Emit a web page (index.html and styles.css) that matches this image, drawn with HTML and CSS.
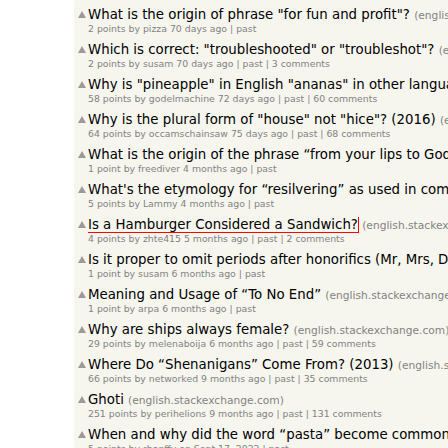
FILE: index.html
```html
<!DOCTYPE html>
<html>
<head>
<meta charset="utf-8">
<link rel="stylesheet" href="styles.css">
</head>
<body>
<main class="page">
  <ul class="list">
    <li class="item"><span class="vote"></span><div class="body"><div class="title"><a class="link">What is the origin of phrase "for fun and profit"?</a> <span class="site">(english.stackexchange.com)</span></div><div class="meta">2 points by pizza 70 days ago | past</div></div></li>
    <li class="item"><span class="vote"></span><div class="body"><div class="title"><a class="link">Which is correct: "troubleshooted" or "troubleshot"?</a> <span class="site">(english.stackexchange.com)</span></div><div class="meta">2 points by susam 70 days ago | past | 3 comments</div></div></li>
    <li class="item"><span class="vote"></span><div class="body"><div class="title"><a class="link">Why is "pineapple" in English "ananas" in other languages?</a> <span class="site">(english.stackexchange.com)</span></div><div class="meta">58 points by godelmachine 72 days ago | past | 60 comments</div></div></li>
    <li class="item"><span class="vote"></span><div class="body"><div class="title"><a class="link">Why is the plural form of "house" not "hice"? (2016)</a> <span class="site">(english.stackexchange.com)</span></div><div class="meta">64 points by occamschainsaw 75 days ago | past | 68 comments</div></div></li>
    <li class="item"><span class="vote"></span><div class="body"><div class="title"><a class="link">What is the origin of the phrase “from your lips to God's ears”?</a> <span class="site">(english.stackexchange.com)</span></div><div class="meta">1 point by freediver 4 months ago | past</div></div></li>
    <li class="item"><span class="vote"></span><div class="body"><div class="title"><a class="link">What's the etymology for “resilvering” as used in computing?</a> <span class="site">(english.stackexchange.com)</span></div><div class="meta">5 points by Lammy 4 months ago | past</div></div></li>
    <li class="item"><span class="vote"></span><div class="body"><div class="title"><a class="link focused">Is a Hamburger Considered a Sandwich?</a> <span class="site">(english.stackexchange.com)</span></div><div class="meta">4 points by zhte415 5 months ago | past | 2 comments</div></div></li>
    <li class="item"><span class="vote"></span><div class="body"><div class="title"><a class="link">Is it proper to omit periods after honorifics (Mr, Mrs, Dr)?</a> <span class="site">(english.stackexchange.com)</span></div><div class="meta">1 point by susam 6 months ago | past</div></div></li>
    <li class="item"><span class="vote"></span><div class="body"><div class="title"><a class="link">Meaning and Usage of “To No End”</a> <span class="site">(english.stackexchange.com)</span></div><div class="meta">1 point by arpa 6 months ago | past</div></div></li>
    <li class="item"><span class="vote"></span><div class="body"><div class="title"><a class="link">Why are ships always female?</a> <span class="site">(english.stackexchange.com)</span></div><div class="meta">29 points by melenaboija 6 months ago | past | 59 comments</div></div></li>
    <li class="item"><span class="vote"></span><div class="body"><div class="title"><a class="link">Where Do “Shenanigans” Come From? (2013)</a> <span class="site">(english.stackexchange.com)</span></div><div class="meta">66 points by networked 9 months ago | past | 35 comments</div></div></li>
    <li class="item"><span class="vote"></span><div class="body"><div class="title"><a class="link">Ghoti</a> <span class="site">(english.stackexchange.com)</span></div><div class="meta">251 points by perihelions 9 months ago | past | 131 comments</div></div></li>
    <li class="item"><span class="vote"></span><div class="body"><div class="title"><a class="link">When and why did the word “pasta” become common in English?</a> <span class="site">(english.stackexchange.com)</span></div><div class="meta">5 points by rbanffy on Sept 17, 2022 | past</div></div></li>
  </ul>
</main>
</body>
</html>
```

FILE: styles.css
```css
html, body {
  margin: 0;
  padding: 0;
  background: #ffffff;
  height: 100%;
  overflow: hidden;
}

.page {
  margin-left: 74px;
  height: 100%;
  background: #f6f6ef;
  font-family: "DejaVu Sans", Verdana, sans-serif;
}

.list {
  list-style: none;
  margin: 0;
  padding: 7px 0 0 3px;
}

.item {
  display: grid;
  grid-template-columns: 11px 1fr;
  margin-bottom: 7px;
  white-space: nowrap;
}

.vote {
  width: 0;
  height: 0;
  margin-top: 4px;
  margin-left: 1px;
  border-left: 4px solid transparent;
  border-right: 4px solid transparent;
  border-bottom: 7px solid #9a9a9a;
}

.body {
  overflow: hidden;
}

.title {
  font-size: 13.33px;
  line-height: 16px;
  height: 16px;
  color: #000000;
}

.link {
  color: #000000;
  text-decoration: none;
}

.focused {
  outline: 1px solid #ff0000;
}

.site {
  font-size: 10.67px;
  line-height: 12px;
  color: #828282;
}

.meta {
  font-size: 9.33px;
  line-height: 12px;
  height: 12px;
  color: #828282;
}
```
